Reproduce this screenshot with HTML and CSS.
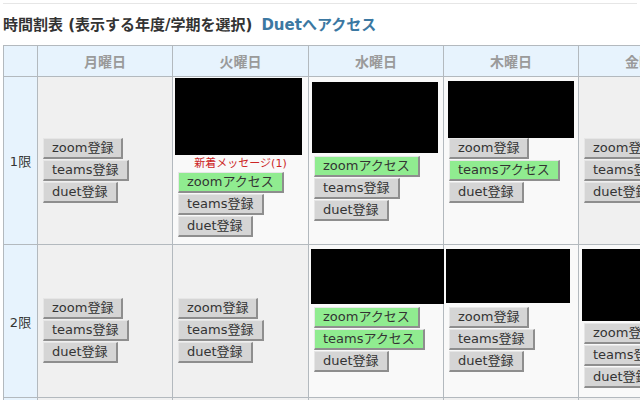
FILE: index.html
```html
<!DOCTYPE html>
<html lang="ja">
<head>
<meta charset="utf-8">
<title>時間割表</title>
<link rel="stylesheet" href="styles.css">
</head>
<body>
<div class="page">
  <div class="topline"></div>
  <h1 class="title">時間割表 (表示する年度/学期を選択)<a class="duet-link" href="#">Duetへアクセス</a></h1>
  <div class="timetable">
    <div class="head corner"></div>
    <div class="head">月曜日</div>
    <div class="head">火曜日</div>
    <div class="head">水曜日</div>
    <div class="head">木曜日</div>
    <div class="head">金曜日</div>

    <div class="period">1限</div>
    <div class="cell empty">
      <button class="btn">zoom登録</button>
      <button class="btn">teams登録</button>
      <button class="btn">duet登録</button>
    </div>
    <div class="cell filled">
      <div class="redact r-tue1"></div>
      <div class="notice">新着メッセージ(1)</div>
      <button class="btn on">zoomアクセス</button>
      <button class="btn">teams登録</button>
      <button class="btn">duet登録</button>
    </div>
    <div class="cell filled">
      <div class="redact r-wed1"></div>
      <button class="btn on">zoomアクセス</button>
      <button class="btn">teams登録</button>
      <button class="btn">duet登録</button>
    </div>
    <div class="cell filled">
      <div class="redact r-thu1"></div>
      <button class="btn">zoom登録</button>
      <button class="btn on">teamsアクセス</button>
      <button class="btn">duet登録</button>
    </div>
    <div class="cell empty">
      <button class="btn">zoom登録</button>
      <button class="btn">teams登録</button>
      <button class="btn">duet登録</button>
    </div>

    <div class="period">2限</div>
    <div class="cell empty">
      <button class="btn">zoom登録</button>
      <button class="btn">teams登録</button>
      <button class="btn">duet登録</button>
    </div>
    <div class="cell empty">
      <button class="btn">zoom登録</button>
      <button class="btn">teams登録</button>
      <button class="btn">duet登録</button>
    </div>
    <div class="cell filled">
      <div class="redact r-wed2"></div>
      <button class="btn on">zoomアクセス</button>
      <button class="btn on">teamsアクセス</button>
      <button class="btn">duet登録</button>
    </div>
    <div class="cell filled">
      <div class="redact r-thu2"></div>
      <button class="btn">zoom登録</button>
      <button class="btn">teams登録</button>
      <button class="btn">duet登録</button>
    </div>
    <div class="cell filled">
      <div class="redact r-fri2"></div>
      <button class="btn">zoom登録</button>
      <button class="btn">teams登録</button>
      <button class="btn">duet登録</button>
    </div>

    <div class="period">3限</div>
    <div class="cell empty"></div>
    <div class="cell empty"></div>
    <div class="cell empty"></div>
    <div class="cell empty"></div>
    <div class="cell empty"></div>
  </div>
</div>
</body>
</html>
```

FILE: styles.css
```css
html, body {
  margin: 0;
  padding: 0;
  overflow: hidden;
  background: #ffffff;
}

body {
  font-family: "DejaVu Sans", "Noto Sans CJK JP", sans-serif;
  color: #333333;
  width: 640px;
  height: 400px;
}

.page {
  padding: 0 3px;
}

.topline {
  margin-top: 3px;
  border-top: 1px solid #e6e6e6;
}

.title {
  margin: 10px 0 9px 0;
  height: 22px;
  line-height: 22px;
  font-size: 15px;
  font-weight: bold;
  color: #333333;
  white-space: nowrap;
}

.duet-link {
  margin-left: 9px;
  color: #3b78a2;
  text-decoration: none;
}

.timetable {
  display: grid;
  grid-template-columns: 33px 134px 135px 134px 134px 134px;
  grid-template-rows: 30px 167px 152px 40px;
  gap: 1px;
  width: max-content;
  background: #b3b9be;
  border: 1px solid #b3b9be;
}

.head {
  background: #e7f3fd;
  color: #9a9a9a;
  font-size: 14px;
  font-weight: bold;
  display: flex;
  align-items: center;
  justify-content: center;
}

.period {
  background: #e7f3fd;
  font-size: 13px;
  display: flex;
  align-items: center;
  justify-content: center;
}

.cell {
  display: flex;
  flex-direction: column;
  align-items: flex-start;
  padding-left: 5px;
  min-width: 0;
}

.cell.empty {
  background: #f0f0f0;
  justify-content: center;
  padding-top: 20px;
}

.cell.filled {
  background: #f9f9f9;
  justify-content: flex-start;
}

.btn {
  display: block;
  font-family: "DejaVu Sans", "Noto Sans CJK JP", sans-serif;
  font-size: 13px;
  line-height: 16px;
  color: #333333;
  background: #d5d5d5;
  padding: 1px 8px;
  margin: 0 0 1px 0;
  border-style: solid;
  border-width: 1px 2px 2px 1px;
  border-color: #e6e6e6 #8e8e8e #8e8e8e #e6e6e6;
  border-radius: 0;
  white-space: nowrap;
  cursor: pointer;
}

.btn.on {
  background: #90ec90;
}

.notice {
  align-self: stretch;
  margin: 1px 0 0 -5px;
  height: 16px;
  line-height: 16px;
  font-size: 11px;
  color: #cc2626;
  text-align: center;
  white-space: nowrap;
}

.redact {
  background: #000000;
  flex: none;
}

.r-tue1 { width: 127px; height: 77px; margin: 1px 0 0 -3px; }
.r-wed1 { width: 126px; height: 71px; margin: 5px 0 3px -2px; }
.r-thu1 { width: 126px; height: 57px; margin: 4px 0 0 -1px; }
.r-wed2 { width: 133px; height: 55px; margin: 4px 0 3px -3px; }
.r-thu2 { width: 124px; height: 54px; margin: 4px 0 4px -3px; }
.r-fri2 { width: 140px; height: 72px; margin: 4px 0 2px -2px; }
```
